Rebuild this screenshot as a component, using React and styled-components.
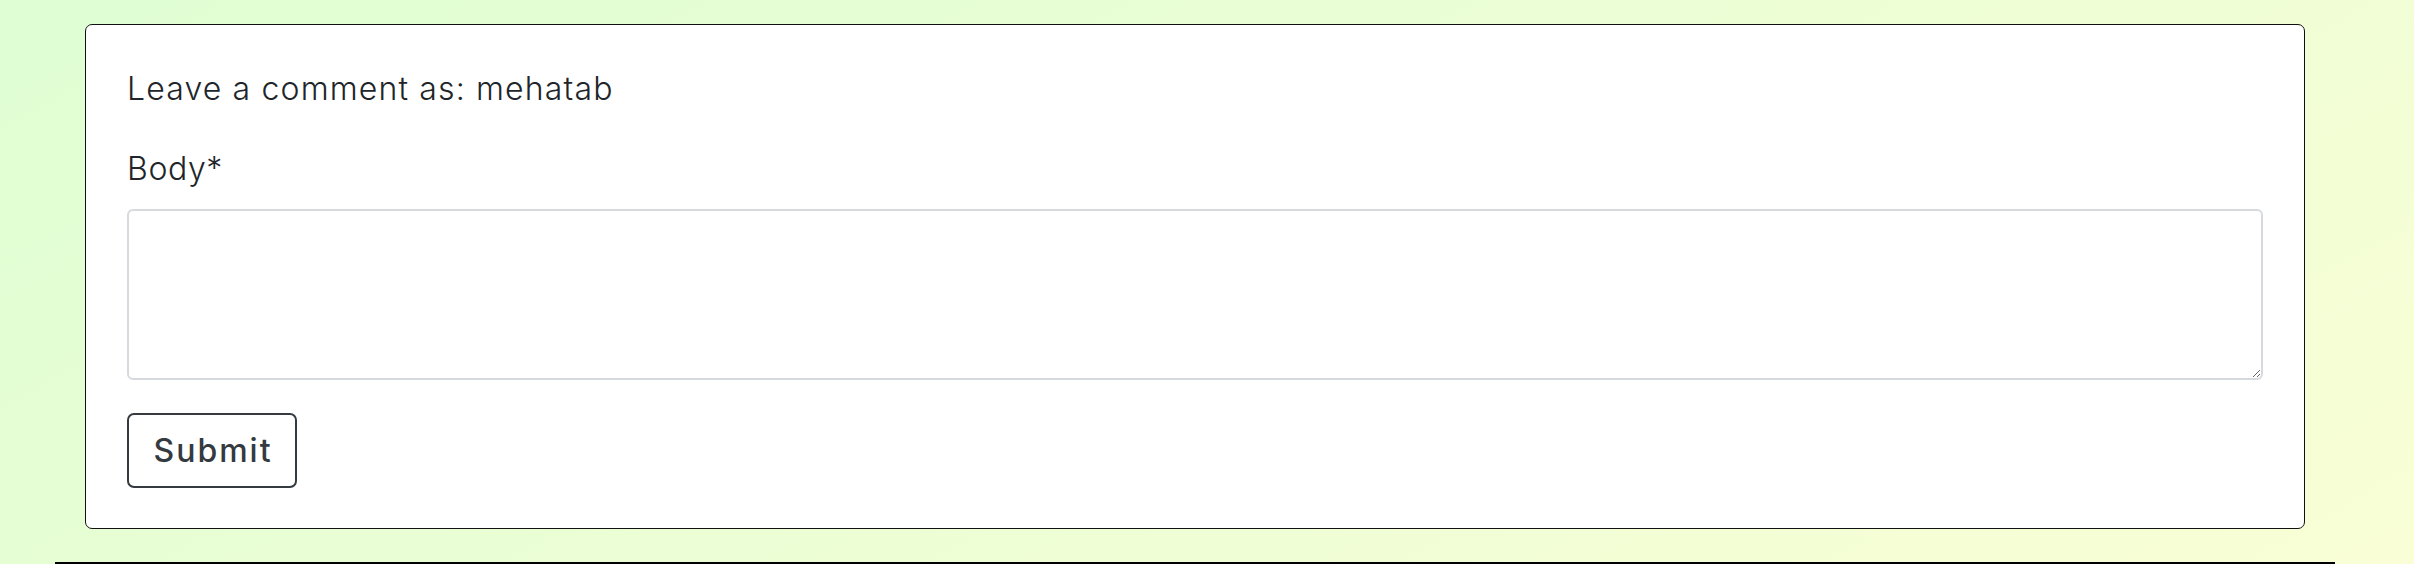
import React from "react";
import styled, { createGlobalStyle } from "styled-components";

const Global = createGlobalStyle`
  html, body {
    margin: 0;
    padding: 0;
    height: 564px;
    overflow: hidden;
  }
  body {
    background: linear-gradient(150deg, #dffed3 0%, #f9fed6 100%);
    font-family: Inter, "Noto Sans", sans-serif;
    color: #212529;
  }
`;

const Page = styled.div`
  width: 2414px;
  height: 564px;
  padding-top: 24px;
  box-sizing: border-box;
  display: flex;
  flex-direction: column;
  overflow: hidden;
`;

const Card = styled.section`
  flex: none;
  margin-left: 85px;
  width: 2220px;
  box-sizing: border-box;
  border: 1px solid #111;
  border-radius: 7px;
  background: #fff;
  padding: 40px 41px 40px 41px;
  display: flex;
  flex-direction: column;
`;

const Heading = styled.h3`
  margin: 0 0 32px;
  font-size: 32px;
  line-height: 48px;
  font-weight: 300;
  letter-spacing: 1.15px;
  color: #212529;
`;

const Label = styled.label`
  display: block;
  margin: 0 0 16px;
  font-size: 32px;
  line-height: 48px;
  font-weight: 300;
  letter-spacing: 0.6px;
  color: #212529;
`;

const TextArea = styled.textarea`
  display: block;
  width: 100%;
  height: 171px;
  box-sizing: border-box;
  border: 2px solid #d6dade;
  border-radius: 6px;
  background: #fff;
  font-family: inherit;
  font-size: 24px;
  padding: 8px 12px;
  resize: vertical;
  outline: none;
`;

const Button = styled.button`
  align-self: flex-start;
  margin-top: 33px;
  width: 170px;
  height: 75px;
  box-sizing: border-box;
  border: 2px solid #343a40;
  border-radius: 7px;
  background: #fff;
  color: #343a40;
  font-family: inherit;
  font-size: 32px;
  font-weight: 500;
  letter-spacing: 2px;
  cursor: pointer;
  padding: 0 0 0 2px;
`;

const Rule = styled.div`
  flex: none;
  margin: 33px 0 0 55px;
  width: 2280px;
  height: 2px;
  background: #000;
`;

export default function App() {
  return (
    <>
      <Global />
      <Page>
        <Card>
          <Heading>Leave a comment as: mehatab</Heading>
          <Label htmlFor="body">Body*</Label>
          <TextArea id="body" name="body" />
          <Button type="submit">Submit</Button>
        </Card>
        <Rule />
      </Page>
    </>
  );
}
